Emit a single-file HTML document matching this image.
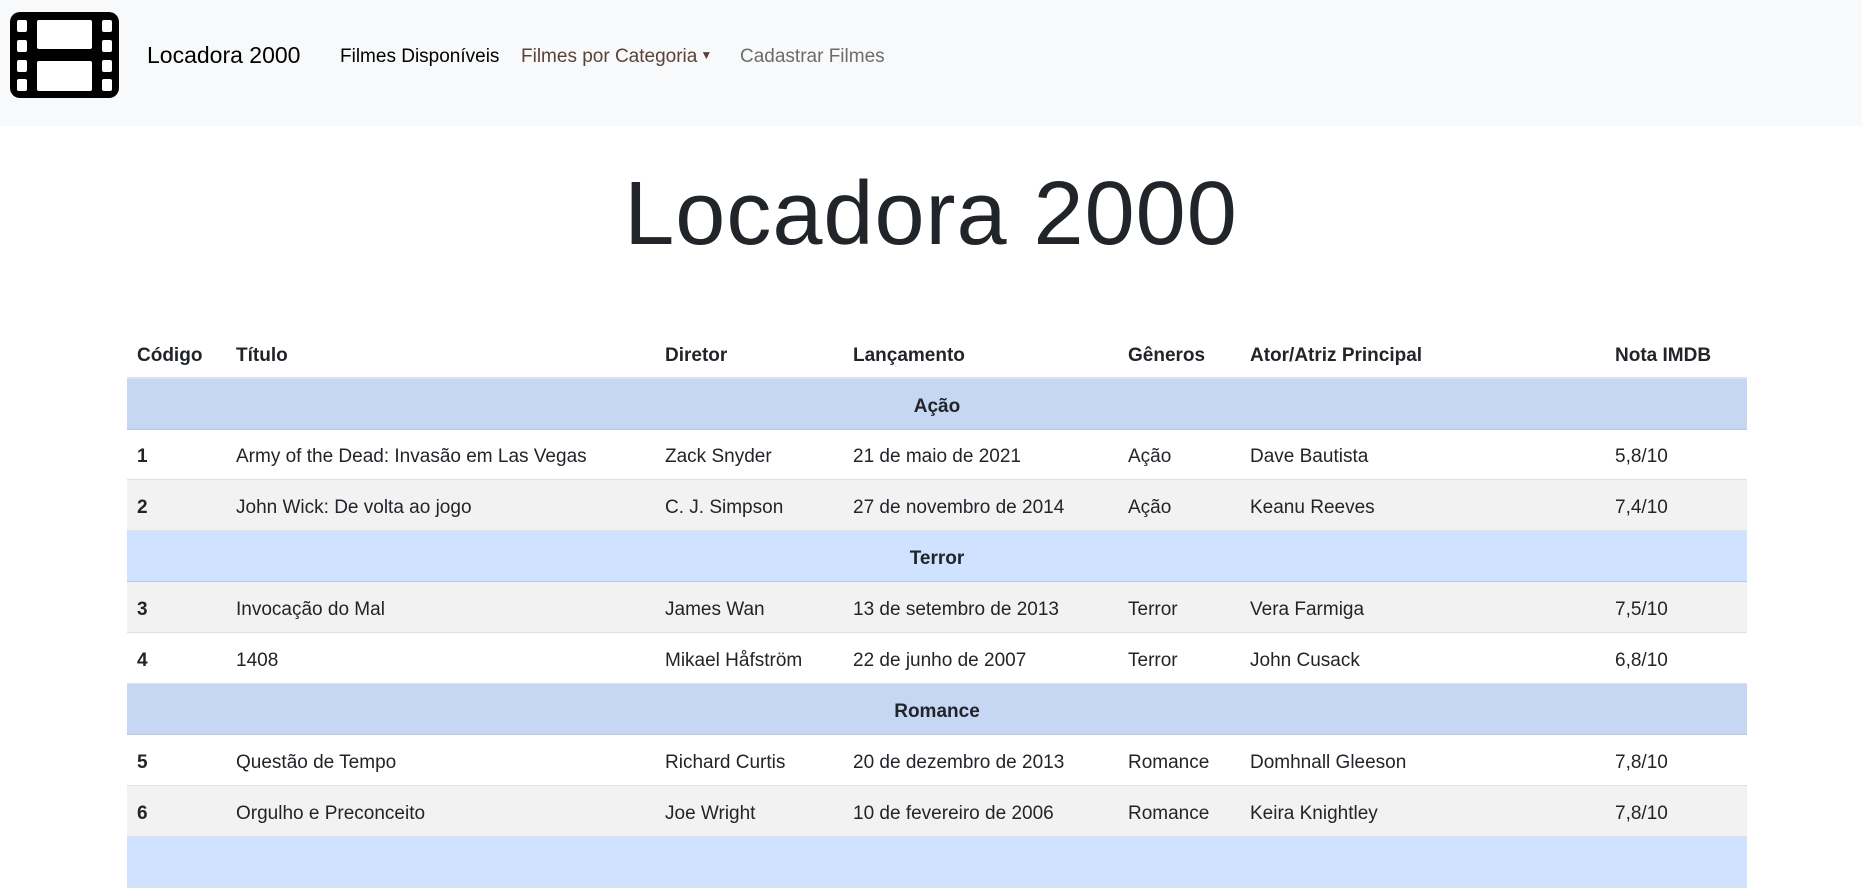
<!DOCTYPE html>
<html><head><meta charset="utf-8"><style>
*{margin:0;padding:0;box-sizing:border-box}
body{width:1862px;height:845px;overflow:hidden;background:#fff;font-family:"Liberation Sans",sans-serif;color:#212529;position:relative}
.nav{position:absolute;left:0;top:0;width:1862px;height:126px;background:#f8f9fa}
.t{position:absolute;white-space:nowrap}
.row{position:absolute;left:127px;width:1620px;height:51px;border-bottom:1px solid #dee2e6}
.row div{position:absolute;top:2px;line-height:51px;font-size:19px;white-space:nowrap}
.g{font-weight:bold;text-align:center;width:1620px;left:0}
.b{font-weight:bold}
</style></head><body>
<div class="nav">
<svg style="position:absolute;left:10px;top:12px" width="109" height="86" viewBox="0 0 109 86">
<rect x="0" y="0" width="109" height="86" rx="10" fill="#000"/>
<rect x="7" y="8" width="10" height="12" rx="2" fill="#fff"/>
<rect x="7" y="28" width="10" height="12" rx="2" fill="#fff"/>
<rect x="7" y="48" width="10" height="12" rx="2" fill="#fff"/>
<rect x="7" y="67" width="10" height="12" rx="2" fill="#fff"/>
<rect x="92" y="8" width="10" height="12" rx="2" fill="#fff"/>
<rect x="92" y="28" width="10" height="12" rx="2" fill="#fff"/>
<rect x="92" y="48" width="10" height="12" rx="2" fill="#fff"/>
<rect x="92" y="67" width="10" height="12" rx="2" fill="#fff"/>
<rect x="27" y="8" width="55" height="29" rx="2" fill="#fff"/>
<rect x="27" y="49" width="55" height="30" rx="2" fill="#fff"/>
</svg>
<div class="t" style="left:147px;top:42px;font-size:23px;color:#000">Locadora 2000</div>
<div class="t" style="left:340px;top:46px;font-size:19px;color:#000">Filmes Disponíveis</div>
<div class="t" style="left:521px;top:46px;font-size:19px;color:#5a4238">Filmes por Categoria<span style="font-size:12px;position:relative;top:-3px;margin-left:3px">▼</span></div>
<div class="t" style="left:740px;top:46px;font-size:19px;color:#6c6c6c">Cadastrar Filmes</div>
</div>
<div class="t" style="left:0;width:1862px;text-align:center;top:163px;font-size:90px;font-weight:300;color:#212529;letter-spacing:1px">Locadora 2000</div>

<div class="row" style="top:328px;border-bottom:2px solid #dee2e6;height:51px">
<div class="b" style="left:10px">Código</div><div class="b" style="left:109px">Título</div><div class="b" style="left:538px">Diretor</div><div class="b" style="left:726px">Lançamento</div><div class="b" style="left:1001px">Gêneros</div><div class="b" style="left:1123px">Ator/Atriz Principal</div><div class="b" style="left:1488px">Nota IMDB</div>
</div>

<div class="row" style="top:379px;background:#c5d7f2;border-color:#b6c7e3"><div class="g">Ação</div></div>
<div class="row" style="top:429px"><div class="b" style="left:10px">1</div><div style="left:109px">Army of the Dead: Invasão em Las Vegas</div><div style="left:538px">Zack Snyder</div><div style="left:726px">21 de maio de 2021</div><div style="left:1001px">Ação</div><div style="left:1123px">Dave Bautista</div><div style="left:1488px">5,8/10</div></div>
<div class="row" style="top:480px;background:#f2f2f2"><div class="b" style="left:10px">2</div><div style="left:109px">John Wick: De volta ao jogo</div><div style="left:538px">C. J. Simpson</div><div style="left:726px">27 de novembro de 2014</div><div style="left:1001px">Ação</div><div style="left:1123px">Keanu Reeves</div><div style="left:1488px">7,4/10</div></div>
<div class="row" style="top:531px;background:#cfe2ff;border-color:#bacbe6"><div class="g">Terror</div></div>
<div class="row" style="top:582px;background:#f2f2f2"><div class="b" style="left:10px">3</div><div style="left:109px">Invocação do Mal</div><div style="left:538px">James Wan</div><div style="left:726px">13 de setembro de 2013</div><div style="left:1001px">Terror</div><div style="left:1123px">Vera Farmiga</div><div style="left:1488px">7,5/10</div></div>
<div class="row" style="top:633px"><div class="b" style="left:10px">4</div><div style="left:109px">1408</div><div style="left:538px">Mikael Håfström</div><div style="left:726px">22 de junho de 2007</div><div style="left:1001px">Terror</div><div style="left:1123px">John Cusack</div><div style="left:1488px">6,8/10</div></div>
<div class="row" style="top:684px;background:#c5d7f2;border-color:#b6c7e3"><div class="g">Romance</div></div>
<div class="row" style="top:735px"><div class="b" style="left:10px">5</div><div style="left:109px">Questão de Tempo</div><div style="left:538px">Richard Curtis</div><div style="left:726px">20 de dezembro de 2013</div><div style="left:1001px">Romance</div><div style="left:1123px">Domhnall Gleeson</div><div style="left:1488px">7,8/10</div></div>
<div class="row" style="top:786px;background:#f2f2f2"><div class="b" style="left:10px">6</div><div style="left:109px">Orgulho e Preconceito</div><div style="left:538px">Joe Wright</div><div style="left:726px">10 de fevereiro de 2006</div><div style="left:1001px">Romance</div><div style="left:1123px">Keira Knightley</div><div style="left:1488px">7,8/10</div></div>
<div class="row" style="top:837px;background:#cfe2ff"></div>
</body></html>
